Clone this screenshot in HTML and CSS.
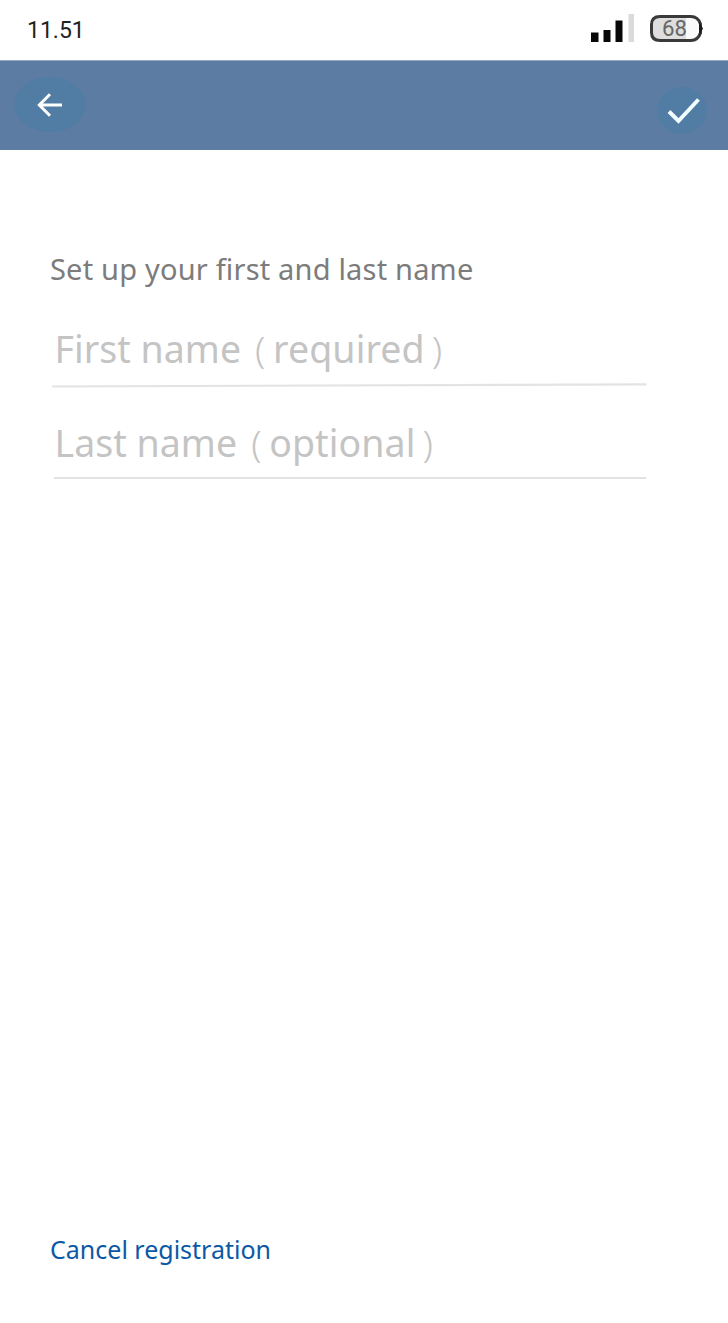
FILE: index.html
```html
<!DOCTYPE html>
<html lang="en">
<head>
<meta charset="utf-8">
<title>Registration</title>
<link rel="stylesheet" href="styles.css">
</head>
<body>
<header class="status">
  <span class="time">11.51</span>
  <svg class="indicators" width="120" height="36" viewBox="0 0 120 36">
    <g fill="#080808"><rect x="7" y="24.500" width="7.500" height="9.500"/><rect x="19.500" y="22" width="7" height="12"/><rect x="31.500" y="12.500" width="7" height="21.500"/></g>
    <rect x="44.500" y="6" width="5.500" height="28" fill="#dadada"/>
    <path d="M76 8.500H107Q114 8.500 116.500 16V25Q114 32.500 107 32.500H76Q67.500 32.500 67.500 24.500V16.500Q67.500 8.500 76 8.500z" fill="#dedede"/>
    <path d="M102 10h5q6 0 8 7v7q-2 7-8 7h-5z" fill="#fafafa"/>
    <path d="M76 8.500H107Q114 8.500 116.500 16V25Q114 32.500 107 32.500H76Q67.500 32.500 67.500 24.500V16.500Q67.500 8.500 76 8.500z" fill="none" stroke="#3a3a3a" stroke-width="3"/>
    <path d="M115 13.500l4 7-4 7.500z" fill="#1c1c1c"/>
    <text class="level" x="78" y="28" textLength="25" lengthAdjust="spacingAndGlyphs">68</text>
  </svg>
</header>
<nav class="bar">
  <button class="back" aria-label="Back">
    <svg width="26" height="26" viewBox="0 0 26 26"><path d="M25 13H2.500M13 2.300 2.300 13 13 23.700" fill="none" stroke="#fff" stroke-width="3"/></svg>
  </button>
  <button class="confirm" aria-label="Confirm">
    <svg width="34" height="28" viewBox="0 0 34 28"><path d="M2 14.500 11.500 24 31.500 2.500" fill="none" stroke="#f4ffff" stroke-width="3.900"/></svg>
  </button>
</nav>
<main class="content">
  <p class="prompt">Set up your first and last name</p>
  <div class="field first"><span class="label">First name</span><span class="paren">(</span><span class="hint">required</span><span class="paren close">)</span></div>
  <svg class="rule" width="600" height="6" viewBox="0 0 600 6"><path d="M2 4.500 596.500 2.300" stroke="#e3e3e3" stroke-width="2.200"/></svg>
  <div class="field last"><span class="label">Last name</span><span class="paren">(</span><span class="hint">optional</span><span class="paren close">)</span></div>
  <svg class="rule" width="600" height="6" viewBox="0 0 600 6"><path d="M4 3H596.500" stroke="#e3e3e3" stroke-width="2"/></svg>
  <a class="cancel">Cancel registration</a>
</main>
</body>
</html>
```
FILE: styles.css
```css
* { box-sizing: border-box; }
body { margin: 0; height: 1323px; display: flex; flex-direction: column; background: #fff; font-family: "Noto Sans", sans-serif; overflow: hidden; }
.status { height: 60px; flex: none; display: flex; justify-content: space-between; padding: 8px 24px 0 27px; }
.time { padding-top: 1px; font: 23px/44px Roboto, sans-serif; color: #222; }
.indicators { display: block; }
.level { font: 400 22px Roboto, sans-serif; fill: #666; }
.bar { height: 90px; flex: none; display: flex; justify-content: space-between; align-items: flex-start; padding: 16px 21px 0 14px; background: #5c7ca3; border-top: 1px solid #93a9c0; }
.bar button { display: flex; align-items: center; justify-content: center; padding: 0; border: 0; border-radius: 50%; background: #517da4; }
.bar .back { width: 72px; height: 55px; }
.bar .confirm { width: 50px; height: 47px; margin-top: 10px; padding-left: 3px; }
.content { flex: 1; display: flex; flex-direction: column; align-items: flex-start; padding: 99px 0 56px 50px; }
.prompt { margin: 0; font-size: 29px; line-height: 40px; letter-spacing: 0.19px; color: #7c7c7c; white-space: nowrap; }
.field { display: flex; height: 50px; margin-left: 4.5px; font-size: 37.5px; line-height: 50px; color: #c4c4c4; white-space: nowrap; }
.first { margin-top: 35px; }
.last { margin-top: 30px; }
.rule { display: block; flex: none; }
.first + .rule { margin-top: 8px; }
.last + .rule { margin-top: 7px; }
.label { letter-spacing: 0.03px; }
.paren { width: 18px; margin-left: 14px; font-weight: 300; }
.hint { letter-spacing: 0.1px; }
.close { margin-left: 7px; }
.cancel { margin-top: auto; font-size: 25px; line-height: 36px; color: #0b59a5; }
```
